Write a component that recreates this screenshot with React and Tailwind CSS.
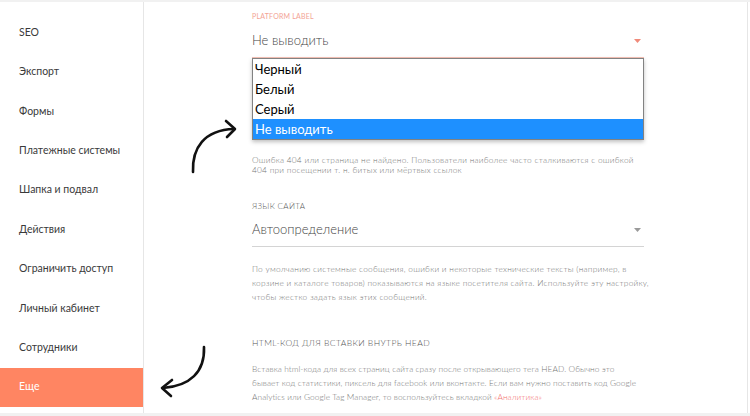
const menu = [
  'SEO',
  'Экспорт',
  'Формы',
  'Платежные системы',
  'Шапка и подвал',
  'Действия',
  'Ограничить доступ',
  'Личный кабинет',
  'Сотрудники',
  'Еще',
]

const options = ['Черный', 'Белый', 'Серый', 'Не выводить']

function Caret({ color }) {
  return (
    <svg width="7" height="4" viewBox="0 0 7 4" className="shrink-0">
      <path d="M0 0 L7 0 L3.5 4 Z" fill={color} />
    </svg>
  )
}

function Arrows() {
  return (
    <svg className="absolute inset-0 pointer-events-none" width="750" height="416" viewBox="0 0 750 416">
      <g fill="none" stroke="#111" strokeWidth="2.6" strokeLinecap="round" strokeLinejoin="round">
        <path d="M193 172 C192 148 204 130 234 129" />
        <path d="M226 121 L235 129 L227 137" />
        <path d="M204 347 C205 372 190 386 163 388" />
        <path d="M172 380 L162 388 L171 396" />
      </g>
    </svg>
  )
}

export default function App() {
  return (
    <div className="relative w-[750px] h-[416px] bg-[#f1f1f1] overflow-hidden pt-[2px] pb-[3px] font-['Lato','Noto_Sans',sans-serif]">
      <div className="flex h-full bg-white">
        <aside className="w-[144px] shrink-0 border-r border-[#e6e6e6] pt-[11px]">
          {menu.map((item) => (
            <div
              key={item}
              className={
                item === 'Еще'
                  ? 'h-[39.4px] flex items-center pl-[19px] text-[10.5px] text-white bg-[#ff8562]'
                  : 'h-[39.4px] flex items-center pl-[19px] text-[10.5px] text-[#3a3a3a]'
              }
            >
              {item}
            </div>
          ))}
        </aside>

        <main className="flex-1 border-r border-[#e6e6e6] mr-[2px] pl-[108px]">
          <div className="w-[392px]">
            <div className="pt-[9px] text-[7px] tracking-[0.03em] uppercase text-[#f3a395]">Platform label</div>

            <div className="relative">
              <div className="h-[36px] flex items-center justify-between border-b border-[#f6c2b6] pr-[3px] pt-[4px]">
                <span className="text-[13px] font-light text-[#444]">Не выводить</span>
                <Caret color="#f08a7a" />
              </div>
              <ul className="absolute left-0 top-[36px] w-[392px] bg-white border border-[#828282] shadow-[0_2px_4px_rgba(0,0,0,0.25)] z-10">
                {options.map((o) => (
                  <li
                    key={o}
                    className={
                      o === 'Не выводить'
                        ? 'h-[20px] leading-[20px] pl-[2px] text-[13px] text-white bg-[#1e90ff]'
                        : 'h-[20px] leading-[20px] pl-[2px] text-[13px] text-black'
                    }
                  >
                    {o}
                  </li>
                ))}
              </ul>
            </div>

            <p className="mt-[97px] text-[8.3px] leading-[10px] font-light tracking-[0.03em] whitespace-nowrap text-[#777]">
              Ошибка 404 или страница не найдено. Пользователи наиболее часто сталкиваются с ошибкой
              <br />
              404 при посещении т. н. битых или мёртвых ссылок
            </p>

            <div className="mt-[25px] text-[8px] tracking-[0.04em] uppercase font-light text-[#555]">Язык сайта</div>
            <div className="h-[35px] flex items-center justify-between border-b border-[#d4d4d4] pr-[3px] pt-[3px]">
              <span className="text-[13px] font-light text-[#444]">Автоопределение</span>
              <Caret color="#9a9a9a" />
            </div>

            <p className="mt-[15px] text-[8.3px] leading-[14px] font-light tracking-[0.03em] whitespace-nowrap text-[#777]">
              По умолчанию системные сообщения, ошибки и некоторые технические тексты (например, в
              <br />
              корзине и каталоге товаров) показываются на языке посетителя сайта. Используйте эту настройку,
              <br />
              чтобы жестко задать язык этих сообщений.
            </p>

            <div className="mt-[33px] text-[8.5px] tracking-[0.05em] uppercase font-light text-[#555]">HTML-код для вставки внутрь HEAD</div>

            <p className="mt-[13px] text-[8.3px] leading-[14px] font-light tracking-[0.01em] whitespace-nowrap text-[#777]">
              Вставка html-кода для всех страниц сайта сразу после открывающего тега HEAD. Обычно это
              <br />
              бывает код статистики, пиксель для facebook или вконтакте. Если вам нужно поставить код Google
              <br />
              Analytics или Google Tag Manager, то воспользуйтесь вкладкой{' '}
              <span className="text-[#f36f6f]">«Аналитика»</span>
            </p>
          </div>
        </main>
      </div>
      <Arrows />
    </div>
  )
}
